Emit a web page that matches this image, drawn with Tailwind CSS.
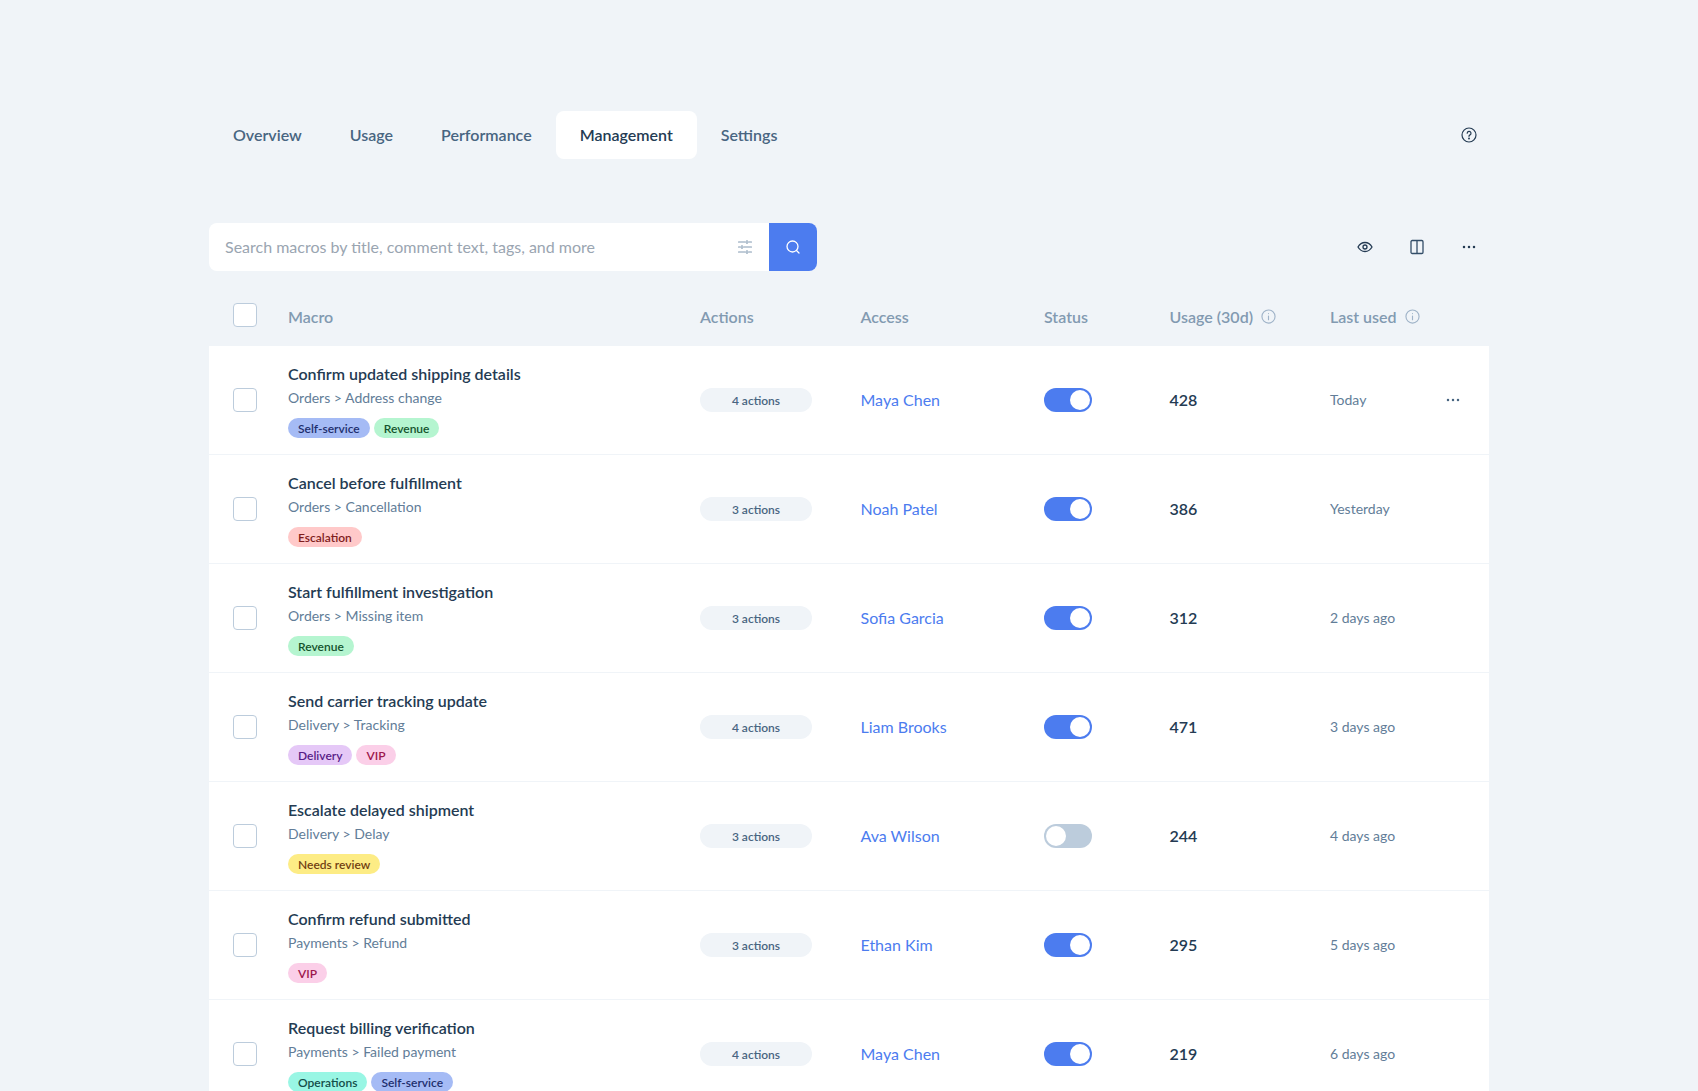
<!DOCTYPE html>
<html lang="en">
<head>
  <meta charset="UTF-8" />
  <title>Macros - Management</title>
  <script src="https://cdn.jsdelivr.net/npm/@tailwindcss/browser@4"></script>
</head>
<body class="bg-[#f0f4f8] h-screen overflow-hidden font-['Lato',sans-serif]">
  <div class="w-[1280px] ml-[209px] pt-[111px]">

    <!-- tabs -->
    <div class="flex items-center justify-between h-12">
      <nav class="flex text-base font-semibold text-[#486581]">
        <a class="h-12 px-6 flex items-center rounded-lg">Overview</a>
        <a class="h-12 px-6 flex items-center rounded-lg">Usage</a>
        <a class="h-12 px-6 flex items-center rounded-lg">Performance</a>
        <a class="h-12 px-6 flex items-center rounded-lg bg-white text-[#243b53]">Management</a>
        <a class="h-12 px-6 flex items-center rounded-lg">Settings</a>
      </nav>
      <button class="w-12 h-12 -mr-1 flex items-center justify-center text-[#243b53]">
        <svg class="w-4 h-4" viewBox="0 0 16 16" fill="none" stroke="currentColor" stroke-width="1.200" stroke-linecap="round"><circle cx="8" cy="8" r="7"/><path d="M6.200 6.200a1.900 1.900 0 1 1 2.800 1.700c-.6.3-1 .7-1 1.400"/><circle cx="8" cy="11.500" r=".4" fill="currentColor"/></svg>
      </button>
    </div>

    <!-- search and toolbar -->
    <div class="flex items-center justify-between mt-16 h-12">
      <div class="flex w-[608px] h-12 bg-white rounded-lg overflow-hidden">
        <div class="flex-1 flex items-center justify-between pl-4 pr-4 text-base text-[#9aa5b1]">
          <span>Search macros by title, comment text, tags, and more</span>
          <svg class="w-4 h-4 text-[#829ab1]" viewBox="0 0 16 16" fill="none" stroke="currentColor" stroke-width="1.200" stroke-linecap="round"><path d="M1.500 3h7M11.500 3h3M10 1.500v3M1.500 8h2M6.500 8h8M5 6.500v3M1.500 13h7M11.500 13h3M10 11.500v3"/></svg>
        </div>
        <button class="w-12 h-12 bg-[#4c7cef] flex items-center justify-center text-white">
          <svg class="w-4 h-4" viewBox="0 0 16 16" fill="none" stroke="currentColor" stroke-width="1.300" stroke-linecap="round"><circle cx="7.500" cy="7.500" r="5.500"/><path d="M11.500 11.500l2.500 2.500"/></svg>
        </button>
      </div>
      <div class="flex items-center gap-1 -mr-1 text-[#243b53]">
        <button class="w-12 h-12 flex items-center justify-center">
          <svg class="w-4 h-4" viewBox="0 0 16 16" fill="none" stroke="currentColor" stroke-width="1.300"><path d="M1 8c1.700-3 4-4.500 7-4.500s5.300 1.500 7 4.500c-1.700 3-4 4.500-7 4.500S2.700 11 1 8z"/><circle cx="8" cy="8" r="2"/></svg>
        </button>
        <button class="w-12 h-12 flex items-center justify-center text-[#334e68]">
          <svg class="w-4 h-4" viewBox="0 0 16 16" fill="none" stroke="currentColor" stroke-width="1.300"><rect x="2" y="1.500" width="12" height="13" rx="1.200"/><path d="M8 1.500v13"/></svg>
        </button>
        <button class="w-12 h-12 flex items-center justify-center">
          <svg class="w-4 h-4" viewBox="0 0 16 16" fill="currentColor"><circle cx="3" cy="8" r="1.250"/><circle cx="8" cy="8" r="1.250"/><circle cx="13" cy="8" r="1.250"/></svg>
        </button>
      </div>
    </div>

    <!-- table head -->
    <div class="grid grid-cols-[79px_412px_160.5px_183.5px_125.5px_160.5px_1fr] items-center h-[75px] pt-[13px] text-base font-semibold text-[#829ab1]">
      <div class="pl-6"><span class="block w-6 h-6 bg-white border border-[#bcccdc] rounded"></span></div>
      <div class="mt-[3px]">Macro</div>
      <div class="mt-[3px]">Actions</div>
      <div class="mt-[3px]">Access</div>
      <div class="mt-[3px]">Status</div>
      <div class="mt-[3px] flex items-center gap-2">Usage (30d)
        <svg class="w-[15px] h-[15px] text-[#9fb3c8]" viewBox="0 0 16 16" fill="none" stroke="currentColor" stroke-width="1.200" stroke-linecap="round"><circle cx="8" cy="8" r="7"/><path d="M8 7.500v4M8 4.800v.1"/></svg>
      </div>
      <div class="mt-[3px] flex items-center gap-2">Last used
        <svg class="w-[15px] h-[15px] text-[#9fb3c8]" viewBox="0 0 16 16" fill="none" stroke="currentColor" stroke-width="1.200" stroke-linecap="round"><circle cx="8" cy="8" r="7"/><path d="M8 7.500v4M8 4.800v.1"/></svg>
      </div>
    </div>

    <!-- rows -->
    <div class="bg-white">

      <div class="grid grid-cols-[79px_412px_160.5px_183.5px_125.5px_160.5px_1fr] items-center h-[109px] border-b border-[#f0f4f8]">
        <div class="pl-6"><span class="block w-6 h-6 bg-white border border-[#bcccdc] rounded"></span></div>
        <div>
          <div class="text-base leading-6 font-semibold text-[#243b53]">Confirm updated shipping details</div>
          <div class="text-sm leading-5 mt-0.5 text-[#627d98]">Orders &gt; Address change</div>
          <div class="flex gap-1 mt-2.5">
            <span class="h-5 pt-px px-2.5 flex items-center rounded-full text-xs font-semibold bg-[#a5bbf5] text-[#1e2f6e]">Self-service</span>
            <span class="h-5 pt-px px-2.5 flex items-center rounded-full text-xs font-semibold bg-[#b5f5d0] text-[#14532d]">Revenue</span>
          </div>
        </div>
        <div><span class="flex items-center justify-center w-28 h-6 pt-px rounded-full bg-[#f0f4f8] text-xs font-semibold text-[#486581]">4 actions</span></div>
        <div class="text-base text-[#4c7cef]">Maya Chen</div>
        <div><span class="flex items-center justify-end w-12 h-6 p-0.5 rounded-full bg-[#4c7cef]"><span class="w-5 h-5 rounded-full bg-white"></span></span></div>
        <div class="text-base font-semibold text-[#243b53]">428</div>
        <div class="flex items-center justify-between pr-[28px] text-sm text-[#627d98]">Today
          <svg class="w-4 h-4 text-[#486581]" viewBox="0 0 16 16" fill="currentColor"><circle cx="3" cy="8" r="1.250"/><circle cx="8" cy="8" r="1.250"/><circle cx="13" cy="8" r="1.250"/></svg>
        </div>
      </div>

      <div class="grid grid-cols-[79px_412px_160.5px_183.5px_125.5px_160.5px_1fr] items-center h-[109px] border-b border-[#f0f4f8]">
        <div class="pl-6"><span class="block w-6 h-6 bg-white border border-[#bcccdc] rounded"></span></div>
        <div>
          <div class="text-base leading-6 font-semibold text-[#243b53]">Cancel before fulfillment</div>
          <div class="text-sm leading-5 mt-0.5 text-[#627d98]">Orders &gt; Cancellation</div>
          <div class="flex gap-1 mt-2.5">
            <span class="h-5 pt-px px-2.5 flex items-center rounded-full text-xs font-semibold bg-[#ffc9c9] text-[#7f1d1d]">Escalation</span>
          </div>
        </div>
        <div><span class="flex items-center justify-center w-28 h-6 pt-px rounded-full bg-[#f0f4f8] text-xs font-semibold text-[#486581]">3 actions</span></div>
        <div class="text-base text-[#4c7cef]">Noah Patel</div>
        <div><span class="flex items-center justify-end w-12 h-6 p-0.5 rounded-full bg-[#4c7cef]"><span class="w-5 h-5 rounded-full bg-white"></span></span></div>
        <div class="text-base font-semibold text-[#243b53]">386</div>
        <div class="text-sm text-[#627d98]">Yesterday</div>
      </div>

      <div class="grid grid-cols-[79px_412px_160.5px_183.5px_125.5px_160.5px_1fr] items-center h-[109px] border-b border-[#f0f4f8]">
        <div class="pl-6"><span class="block w-6 h-6 bg-white border border-[#bcccdc] rounded"></span></div>
        <div>
          <div class="text-base leading-6 font-semibold text-[#243b53]">Start fulfillment investigation</div>
          <div class="text-sm leading-5 mt-0.5 text-[#627d98]">Orders &gt; Missing item</div>
          <div class="flex gap-1 mt-2.5">
            <span class="h-5 pt-px px-2.5 flex items-center rounded-full text-xs font-semibold bg-[#b5f5d0] text-[#14532d]">Revenue</span>
          </div>
        </div>
        <div><span class="flex items-center justify-center w-28 h-6 pt-px rounded-full bg-[#f0f4f8] text-xs font-semibold text-[#486581]">3 actions</span></div>
        <div class="text-base text-[#4c7cef]">Sofia Garcia</div>
        <div><span class="flex items-center justify-end w-12 h-6 p-0.5 rounded-full bg-[#4c7cef]"><span class="w-5 h-5 rounded-full bg-white"></span></span></div>
        <div class="text-base font-semibold text-[#243b53]">312</div>
        <div class="text-sm text-[#627d98]">2 days ago</div>
      </div>

      <div class="grid grid-cols-[79px_412px_160.5px_183.5px_125.5px_160.5px_1fr] items-center h-[109px] border-b border-[#f0f4f8]">
        <div class="pl-6"><span class="block w-6 h-6 bg-white border border-[#bcccdc] rounded"></span></div>
        <div>
          <div class="text-base leading-6 font-semibold text-[#243b53]">Send carrier tracking update</div>
          <div class="text-sm leading-5 mt-0.5 text-[#627d98]">Delivery &gt; Tracking</div>
          <div class="flex gap-1 mt-2.5">
            <span class="h-5 pt-px px-2.5 flex items-center rounded-full text-xs font-semibold bg-[#e5c8f7] text-[#581c87]">Delivery</span>
            <span class="h-5 pt-px px-2.5 flex items-center rounded-full text-xs font-semibold bg-[#fbcfe8] text-[#9d174d]">VIP</span>
          </div>
        </div>
        <div><span class="flex items-center justify-center w-28 h-6 pt-px rounded-full bg-[#f0f4f8] text-xs font-semibold text-[#486581]">4 actions</span></div>
        <div class="text-base text-[#4c7cef]">Liam Brooks</div>
        <div><span class="flex items-center justify-end w-12 h-6 p-0.5 rounded-full bg-[#4c7cef]"><span class="w-5 h-5 rounded-full bg-white"></span></span></div>
        <div class="text-base font-semibold text-[#243b53]">471</div>
        <div class="text-sm text-[#627d98]">3 days ago</div>
      </div>

      <div class="grid grid-cols-[79px_412px_160.5px_183.5px_125.5px_160.5px_1fr] items-center h-[109px] border-b border-[#f0f4f8]">
        <div class="pl-6"><span class="block w-6 h-6 bg-white border border-[#bcccdc] rounded"></span></div>
        <div>
          <div class="text-base leading-6 font-semibold text-[#243b53]">Escalate delayed shipment</div>
          <div class="text-sm leading-5 mt-0.5 text-[#627d98]">Delivery &gt; Delay</div>
          <div class="flex gap-1 mt-2.5">
            <span class="h-5 pt-px px-2.5 flex items-center rounded-full text-xs font-semibold bg-[#fdec85] text-[#713f12]">Needs review</span>
          </div>
        </div>
        <div><span class="flex items-center justify-center w-28 h-6 pt-px rounded-full bg-[#f0f4f8] text-xs font-semibold text-[#486581]">3 actions</span></div>
        <div class="text-base text-[#4c7cef]">Ava Wilson</div>
        <div><span class="flex items-center justify-start w-12 h-6 p-0.5 rounded-full bg-[#bcccdc]"><span class="w-5 h-5 rounded-full bg-white"></span></span></div>
        <div class="text-base font-semibold text-[#243b53]">244</div>
        <div class="text-sm text-[#627d98]">4 days ago</div>
      </div>

      <div class="grid grid-cols-[79px_412px_160.5px_183.5px_125.5px_160.5px_1fr] items-center h-[109px] border-b border-[#f0f4f8]">
        <div class="pl-6"><span class="block w-6 h-6 bg-white border border-[#bcccdc] rounded"></span></div>
        <div>
          <div class="text-base leading-6 font-semibold text-[#243b53]">Confirm refund submitted</div>
          <div class="text-sm leading-5 mt-0.5 text-[#627d98]">Payments &gt; Refund</div>
          <div class="flex gap-1 mt-2.5">
            <span class="h-5 pt-px px-2.5 flex items-center rounded-full text-xs font-semibold bg-[#fbcfe8] text-[#9d174d]">VIP</span>
          </div>
        </div>
        <div><span class="flex items-center justify-center w-28 h-6 pt-px rounded-full bg-[#f0f4f8] text-xs font-semibold text-[#486581]">3 actions</span></div>
        <div class="text-base text-[#4c7cef]">Ethan Kim</div>
        <div><span class="flex items-center justify-end w-12 h-6 p-0.5 rounded-full bg-[#4c7cef]"><span class="w-5 h-5 rounded-full bg-white"></span></span></div>
        <div class="text-base font-semibold text-[#243b53]">295</div>
        <div class="text-sm text-[#627d98]">5 days ago</div>
      </div>

      <div class="grid grid-cols-[79px_412px_160.5px_183.5px_125.5px_160.5px_1fr] items-center h-[109px] border-b border-[#f0f4f8]">
        <div class="pl-6"><span class="block w-6 h-6 bg-white border border-[#bcccdc] rounded"></span></div>
        <div>
          <div class="text-base leading-6 font-semibold text-[#243b53]">Request billing verification</div>
          <div class="text-sm leading-5 mt-0.5 text-[#627d98]">Payments &gt; Failed payment</div>
          <div class="flex gap-1 mt-2.5">
            <span class="h-5 pt-px px-2.5 flex items-center rounded-full text-xs font-semibold bg-[#99f6e4] text-[#134e4a]">Operations</span>
            <span class="h-5 pt-px px-2.5 flex items-center rounded-full text-xs font-semibold bg-[#a5bbf5] text-[#1e2f6e]">Self-service</span>
          </div>
        </div>
        <div><span class="flex items-center justify-center w-28 h-6 pt-px rounded-full bg-[#f0f4f8] text-xs font-semibold text-[#486581]">4 actions</span></div>
        <div class="text-base text-[#4c7cef]">Maya Chen</div>
        <div><span class="flex items-center justify-end w-12 h-6 p-0.5 rounded-full bg-[#4c7cef]"><span class="w-5 h-5 rounded-full bg-white"></span></span></div>
        <div class="text-base font-semibold text-[#243b53]">219</div>
        <div class="text-sm text-[#627d98]">6 days ago</div>
      </div>

    </div>
  </div>
</body>
</html>
